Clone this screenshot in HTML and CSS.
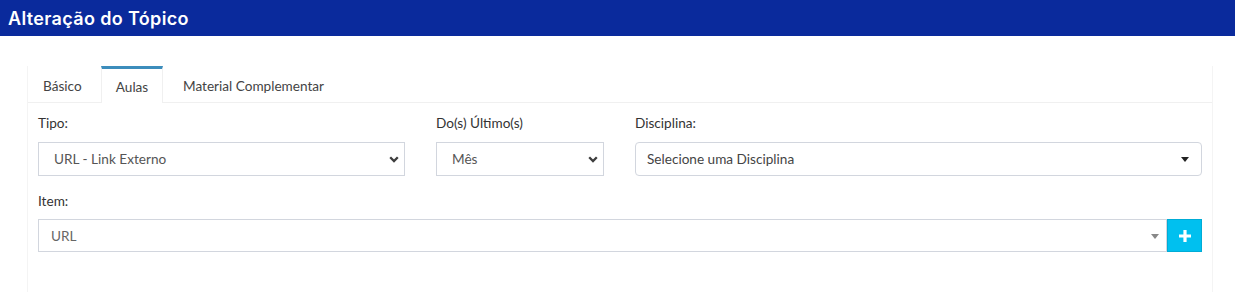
FILE: index.html
```html
<!DOCTYPE html>
<html lang="pt-BR">
<head>
<meta charset="utf-8">
<title>Alteração do Tópico</title>
<link rel="stylesheet" href="styles.css">
</head>
<body>
<header class="page-header">
  <h1 class="page-title">Alteração do Tópico</h1>
</header>
<main class="page-body">
  <section class="tabs-box">
    <nav class="tabs">
      <a class="tab tab-first">Básico</a>
      <a class="tab tab-active">Aulas</a>
      <a class="tab tab-last">Material Complementar</a>
    </nav>
    <div class="tab-content">
      <div class="form-row row-top">
        <div class="field">
          <label class="label">Tipo:</label>
          <div class="select native">
            <span class="value">URL - Link Externo</span>
            <svg class="chevron" width="10" height="7" viewBox="0 0 10 7"><path d="M1.2 1.2 L5 5 L8.8 1.2" fill="none" stroke="#3d3d3d" stroke-width="2.3"/></svg>
          </div>
        </div>
        <div class="field">
          <label class="label">Do(s) Último(s)</label>
          <div class="select native">
            <span class="value">Mês</span>
            <svg class="chevron" width="10" height="7" viewBox="0 0 10 7"><path d="M1.2 1.2 L5 5 L8.8 1.2" fill="none" stroke="#3d3d3d" stroke-width="2.3"/></svg>
          </div>
        </div>
        <div class="field">
          <label class="label">Disciplina:</label>
          <div class="select select2 rounded">
            <span class="value dark">Selecione uma Disciplina</span>
            <span class="caret"></span>
          </div>
        </div>
      </div>
      <div class="form-row row-item">
        <div class="field">
          <label class="label">Item:</label>
          <div class="input-group">
            <div class="select select2 grow">
              <span class="value muted">URL</span>
              <span class="caret light"></span>
            </div>
            <button class="btn-add" type="button">
              <svg width="14" height="14" viewBox="0 0 14 14"><path d="M7 1 V13 M1 7 H13" stroke="#fff" stroke-width="3.2"/></svg>
            </button>
          </div>
        </div>
      </div>
    </div>
  </section>
</main>
</body>
</html>
```

FILE: styles.css
```css
* { box-sizing: border-box; }
html, body { margin: 0; padding: 0; background: #fff; }
body {
  font-family: "Source Sans Pro", Lato, "Noto Sans", sans-serif;
  font-size: 13.6px;
  color: #333;
  height: 292px;
  overflow: hidden;
}
.page-header {
  background: #0a2a9c;
  height: 36px;
  display: flex;
  align-items: center;
  padding-left: 8px;
}
.page-title {
  margin: 0;
  color: #fff;
  font-family: Inter, "Noto Sans", sans-serif;
  font-weight: 600;
  font-size: 18px;
  letter-spacing: 0.35px;
}
.page-body {
  padding: 30px 22px 0 27px;
}
.tabs-box {
  border-left: 1px solid #f4f4f4;
  border-right: 1px solid #f4f4f4;
  min-height: 230px;
  background: #fff;
}
.tabs {
  display: flex;
  border-bottom: 1px solid #f0f0f0;
  height: 37px;
  align-items: flex-end;
}
.tab {
  display: block;
  height: 34px;
  line-height: 30px;
  padding: 0 15px;
  color: #444;
  border-top: 3px solid transparent;
}
.tab-first { width: 73px; }
.tab-last { padding-left: 20px; }
.tab-active {
  border-top-color: #3c8dbc;
  border-left: 1px solid #f0f0f0;
  border-right: 1px solid #f0f0f0;
  height: 37px;
  line-height: 37px;
  margin-bottom: -1px;
  background: #fff;
  width: 62px;
  padding: 0;
  text-align: center;
}
.tab-content {
  padding: 12px 10px 0 10px;
}
.form-row {
  display: grid;
  column-gap: 31px;
}
.row-top {
  grid-template-columns: 367px 168px 567px;
}
.row-item {
  grid-template-columns: 1164px;
  margin-top: 17px;
}
.label {
  display: block;
  color: #333;
  line-height: 17px;
  margin-bottom: 10px;
}
.row-item .label { margin-bottom: 9px; }
.select {
  height: 34px;
  border: 1px solid #d2d6de;
  display: flex;
  align-items: center;
  justify-content: space-between;
  background: #fff;
}
.native { padding: 0 5px 0 15px; }
.value { color: #555; }
.value.dark { color: #444; }
.value.muted { color: #666; }
.select2 { padding: 0 12px 0 11px; }
.rounded { border-radius: 4px; }
.row-item .select { height: 33px; }
.row-item .select2 { padding-left: 12px; padding-right: 7px; }
.caret {
  width: 0; height: 0;
  border-left: 4px solid transparent;
  border-right: 4px solid transparent;
  border-top: 5px solid #222;
  margin-top: 1px;
}
.caret.light { border-top-color: #888; }
.input-group {
  display: flex;
}
.grow { flex: 1; }
.btn-add {
  width: 35px;
  height: 33px;
  border: 1px solid #00acd6;
  background: #00c0ef;
  display: flex;
  align-items: center;
  justify-content: center;
  padding: 0;
}
```
